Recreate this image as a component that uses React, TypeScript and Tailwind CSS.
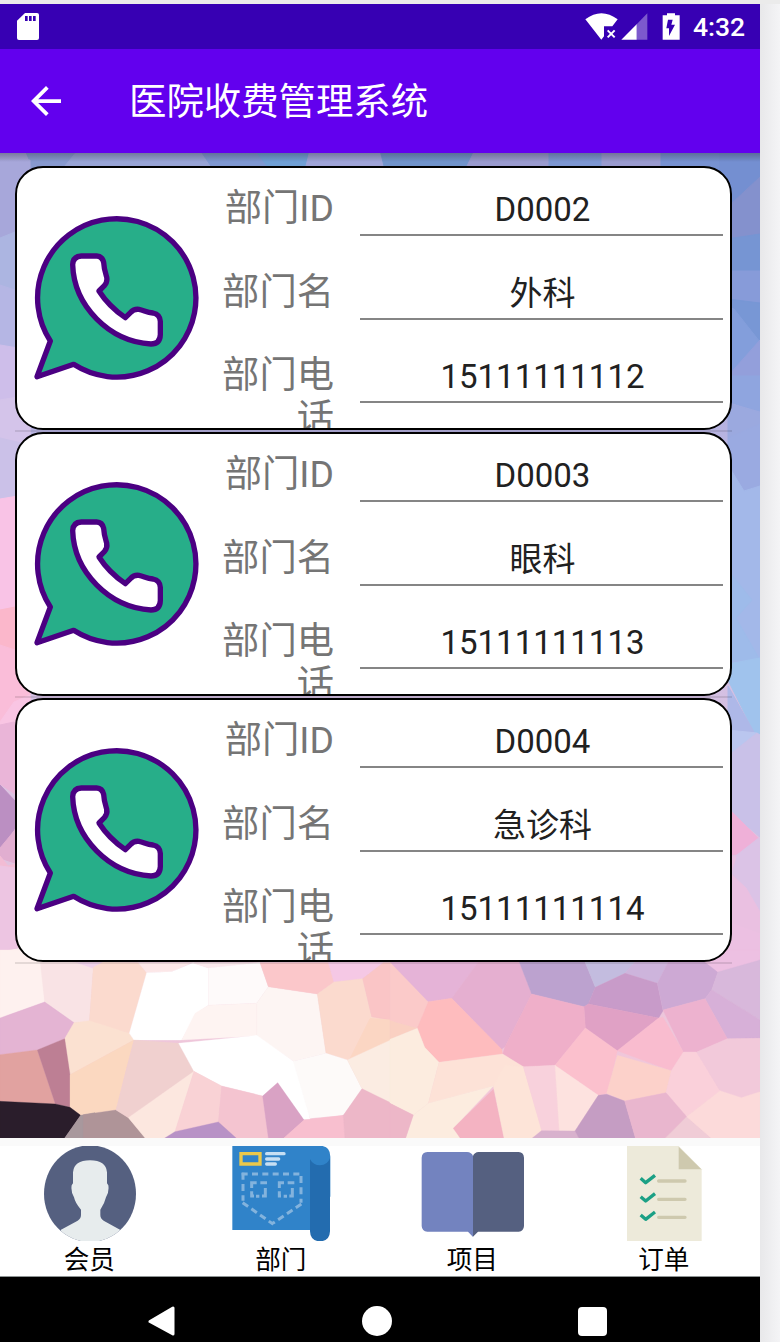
import type { ReactNode } from "react";

type Department = { id: string; name: string; phone: string };
type Shape = [fill: string, points: string];

const departments: Department[] = [
  { id: "D0002", name: "外科", phone: "15111111112" },
  { id: "D0003", name: "眼科", phone: "15111111113" },
  { id: "D0004", name: "急诊科", phone: "15111111114" },
];

const topShapes: Shape[] = [
  ["#a7a5d8", "0,150 30,150 24,230 0,240"],
  ["#8799cf", "25,150 78,150 60,175 36,175"],
  ["#98a4d6", "78,150 205,150 215,172 60,172"],
  ["#7f98d2", "200,150 310,150 300,172 215,172"],
  ["#70a0d6", "255,150 312,150 305,170 270,170"],
  ["#9fa4d8", "310,150 380,150 385,170 305,170"],
  ["#7194cc", "380,150 480,150 465,170 385,170"],
  ["#9a9bcf", "475,150 549,150 549,170 465,170"],
  ["#7d97d3", "549,150 602,150 602,170 549,170"],
  ["#9a9bcf", "602,150 661,150 661,170 602,170"],
  ["#7792d2", "661,150 770,150 770,220 661,170"],
];

const leftShapes: Shape[] = [
  ["#a7a7da", "0,160 30,160 30,226 0,240"],
  ["#acb5e1", "0,238 30,226 30,300 0,285"],
  ["#b5b6e4", "0,285 30,295 30,350 0,345"],
  ["#cebeea", "0,345 30,350 30,440 0,418"],
  ["#d4c4ea", "0,400 30,395 30,500 0,500"],
  ["#cbc1e8", "0,438 30,445 30,498 0,499"],
  ["#f9c3e6", "0,499 30,494 30,610 0,612"],
  ["#fbb7cb", "0,610 30,604 30,665 0,660"],
  ["#fabdd9", "0,645 30,655 30,700 0,740"],
  ["#f9c5e3", "0,722 14,702 30,695 30,760 0,740"],
  ["#eab5d8", "0,725 14,722 30,735 30,804 0,784"],
  ["#bb8fc2", "0,785 16,802 26,812 0,850"],
  ["#e1aed0", "0,848 20,824 30,840 30,868 0,858"],
  ["#f2bcd4", "0,856 8,866 30,860 30,880 0,868"],
  ["#edc5e2", "0,866 30,870 30,944 0,952"],
  ["#fdf0f0", "0,952 48,944 48,985 0,1020"],
];

const rightShapes: Shape[] = [
  ["#748fd1", "720,150 760,150 760,220 720,240"],
  ["#8491cd", "730,205 760,177 760,234 730,242"],
  ["#7695d3", "720,240 760,234 760,272 720,274"],
  ["#879bd9", "720,271 760,271 760,303 720,303"],
  ["#7897d5", "720,298 760,303 760,342 732,307"],
  ["#839edb", "720,306 734,309 760,342 760,376 720,376"],
  ["#939fdb", "728,376 760,340 760,376"],
  ["#8fa5df", "720,376 760,376 760,412 732,403"],
  ["#9ba9df", "728,403 760,412 760,430 728,438"],
  ["#9aaae1", "728,438 760,424 760,488 744,491 728,470"],
  ["#a3b8e9", "728,465 744,491 760,486 760,660 728,664"],
  ["#9ebbea", "728,570 752,600 736,618 760,660 728,660"],
  ["#a0c3ed", "728,664 760,658 760,742 754,732 728,680"],
  ["#aeb8e8", "728,686 754,732 728,731"],
  ["#bac6ef", "728,730 757,733 732,756 728,750"],
  ["#c9c1e8", "728,756 757,733 760,735 760,837 728,810"],
  ["#efb0d8", "730,810 758,838 744,853 730,855"],
  ["#dbc3e6", "728,862 760,837 760,912 730,870"],
  ["#eac0e1", "728,855 736,857 731,874 746,888 760,912 760,934 728,930"],
  ["#ecc0e2", "728,922 760,934 760,960 728,972"],
];

const lowerLeftShapes: Shape[] = [
  ["#fef1ef", "0,0 120,0 135,156 0,204"],
  ["#f9e3e5", "120,30 240,38 280,52 268,215 222,218 134,156"],
  ["#f0d1ea", "230,38 320,38 280,55"],
  ["#fbdace", "280,52 310,36 415,38 440,68 388,250 268,215"],
  ["#e4b4d3", "0,204 134,156 222,218 194,266 112,300 0,314"],
  ["#fbe1d1", "194,266 222,218 268,212 388,250 402,270 210,374"],
  ["#e1a2a0", "0,314 112,300 166,462 0,454"],
  ["#bd7f94", "112,300 194,266 210,374 210,472 166,462"],
  ["#fbd8c0", "210,374 402,270 378,360 348,480 242,496 210,472"],
  ["#2a1d2b", "0,454 166,462 210,472 242,496 190,570 0,570"],
  ["#a8989d", "242,496 285,488 285,570 190,570"],
  ["#af9498", "250,494 348,480 385,503 442,570 250,570"],
  ["#fce7e8", "415,38 575,38 515,65 440,68"],
  ["#ffffff", "440,68 515,65 580,38 625,54 625,166 590,190 545,270 402,270 388,250"],
  ["#fbe9ec", "575,38 780,38 625,54"],
  ["#fefafa", "625,54 780,38 805,110 770,160 625,166"],
  ["#fef4f2", "625,166 770,160 770,258 545,270 585,190"],
  ["#fdf5f3", "805,110 952,132 978,310 880,334 770,258 770,160"],
  ["#fbc7ca", "780,38 985,38 1002,96 952,132 805,110"],
  ["#f5c8e5", "985,38 1150,38 1088,86 1002,96"],
  ["#fbdace", "952,132 1002,96 1088,86 1115,200 1170,210 1170,270 1042,330 978,310"],
  ["#fac5c6", "1088,86 1150,38 1180,38 1180,212 1115,200"],
  ["#fbd6c3", "1110,205 1180,210 1180,268 1050,325"],
  ["#f0d0cf", "402,270 536,280 582,364 385,503 348,480"],
  ["#fce7df", "582,364 525,545 490,570 440,570 385,503"],
  ["#ffffff", "536,280 770,256 880,334 905,350 930,508 910,508 833,398 788,438 665,408 582,364"],
  ["#f9d2d5", "582,364 665,408 655,516 525,545"],
  ["#f4c4d0", "665,408 788,438 806,570 710,570 655,516"],
  ["#d9a2c4", "788,438 833,398 912,510 845,570 806,570"],
  ["#fdfaf9", "880,334 978,310 1042,330 1086,416 1030,496 930,505"],
  ["#fbece2", "1042,330 1180,266 1180,465 1086,416"],
  ["#f8bfcf", "912,510 1030,496 1035,570 845,570"],
  ["#edb7c8", "1030,496 1086,416 1180,462 1180,570 1035,570"],
  ["#b892c6", "525,545 655,516 715,570 485,570"],
];

const lowerRightShapes: Shape[] = [
  ["#fbcac9", "0,30 115,155 82,235 0,212"],
  ["#fad0c2", "0,212 82,235 0,268"],
  ["#e5b3d7", "0,36 265,36 185,145 115,155"],
  ["#e5afd0", "265,36 388,36 425,132 345,290 335,298 185,145"],
  ["#febcbe", "115,155 185,145 335,298 338,312 147,337 104,292 82,235"],
  ["#bca2cf", "388,36 585,36 616,112 595,162 582,170 425,132"],
  ["#c3bcdf", "585,36 735,36 705,70 616,112"],
  ["#cdb4dc", "735,36 835,36 802,100 705,70"],
  ["#c89bc9", "616,112 705,70 802,100 819,182 806,204 595,162"],
  ["#e0a1c5", "582,170 595,162 806,204 682,302 586,234"],
  ["#efafc9", "425,132 582,170 586,234 495,346 400,350 338,312 345,290"],
  ["#cda9d4", "835,36 950,36 984,66 965,120 945,146 819,180 802,100"],
  ["#edc0e2", "945,36 1000,0 1110,0 1110,30 984,66"],
  ["#d8b8db", "984,66 1110,30 1110,210 965,120"],
  ["#d7b0d8", "945,146 965,120 1110,210 1110,265 1012,266"],
  ["#edb2cf", "819,180 945,146 1012,266 920,306 880,306"],
  ["#f9bccf", "806,204 819,202 880,306 844,362 682,302"],
  ["#fbc0cd", "586,234 682,302 652,430 625,436 495,346"],
  ["#fcd1ca", "682,316 844,362 828,428 704,453 650,430"],
  ["#fad0da", "880,306 920,306 990,422 890,500 828,428 844,362"],
  ["#f2c9da", "920,306 1012,266 1110,265 1110,430 1054,443 990,422"],
  ["#fcecdf", "0,268 82,235 104,292 147,337 115,460 70,495 0,460"],
  ["#fde2d7", "147,337 338,312 400,350 345,390 310,408 115,460"],
  ["#fcecdf", "115,460 310,408 190,535 215,570 45,570 70,495"],
  ["#fde4d8", "310,408 345,345 400,350 455,540 420,570 342,570"],
  ["#edb7c8", "0,460 70,495 45,570 0,570"],
  ["#f4b3c2", "310,418 342,570 215,570 190,535"],
  ["#f8d1dc", "400,350 495,346 508,543 455,542"],
  ["#fde2df", "495,346 625,436 555,543 508,543"],
  ["#d8b1cd", "455,542 555,543 570,570 420,570"],
  ["#c59dc3", "625,436 650,433 704,453 738,570 570,570 555,543"],
  ["#e9b6ce", "704,453 828,428 890,500 828,570 738,570"],
  ["#f0ccd6", "890,500 970,570 820,570"],
  ["#fcdada", "990,422 1054,443 1110,425 1110,570 970,570 890,500"],
];

function Shapes({ shapes, transform }: { shapes: Shape[]; transform?: string }) {
  return (
    <g transform={transform}>
      {shapes.map(([fill, points], i) => (
        <polygon key={i} fill={fill} stroke={fill} strokeWidth="1" points={points} />
      ))}
    </g>
  );
}

function Mosaic() {
  return (
    <svg className="absolute inset-0 h-full w-full" viewBox="0 153 760 985" preserveAspectRatio="none">
      <defs>
        <linearGradient id="sky" x1="0" y1="0" x2="0" y2="1">
          <stop offset="0" stopColor="#8c9bd2" />
          <stop offset="0.4" stopColor="#c9bde6" />
          <stop offset="1" stopColor="#f6c8d8" />
        </linearGradient>
        <linearGradient id="barShadow" x1="0" y1="0" x2="0" y2="1">
          <stop offset="0" stopColor="#303040" stopOpacity="0.38" />
          <stop offset="1" stopColor="#303040" stopOpacity="0" />
        </linearGradient>
      </defs>
      <rect x="0" y="153" width="760" height="985" fill="url(#sky)" />
      <Shapes shapes={topShapes} />
      <Shapes shapes={leftShapes} />
      <Shapes shapes={rightShapes} />
      <Shapes shapes={lowerLeftShapes} transform="translate(0 950) scale(0.33333)" />
      <Shapes shapes={lowerRightShapes} transform="translate(390 950) scale(0.33333)" />
      <rect x="0" y="153" width="760" height="9" fill="url(#barShadow)" />
    </svg>
  );
}

function PhoneBubble() {
  return (
    <svg className="h-[168px] w-[168px]" viewBox="96 176 504 504" fill="none" stroke="#4b0082" strokeWidth="16" strokeLinejoin="round">
      <path fill="#27ae89" d="M151 560A237.500 237.500 0 1 1 221 630L111 667Z" />
      <path
        fill="#fff"
        d="M244 305H290Q307 306 311 324C312 344 315 352 320 368Q323 383 313 394L297 410C316 440 344 468 376 490L392 474Q402 463 417 465C432 468 440 474 459 476Q480 480 481 501V541Q480 569 453 569C327 561 222 455 218 331Q219 306 244 305Z"
      />
    </svg>
  );
}

function Field({ label, value }: { label: string; value: string }) {
  return (
    <div className="flex h-[83.600px]">
      <div className="mr-[26px] w-[122px] pt-1 text-right text-[37.300px] leading-[43px] text-[#757575]">
        {label}
      </div>
      <div className="flex h-[53px] w-[363px] items-center justify-center border-b-2 border-[#858585] pt-[2px] pl-[2px] text-[33px] leading-none text-[#212121]">
        {value}
      </div>
    </div>
  );
}

function DepartmentCard({ department }: { department: Department }) {
  return (
    <li className="border-b-2 border-black/10">
      <article className="flex h-[264px] overflow-hidden rounded-[28px] border-2 border-black bg-white">
        <div className="w-[195px] shrink-0 pt-[45px] pl-[15px]">
          <PhoneBubble />
        </div>
        <div className="pt-[15px]">
          <Field label="部门ID" value={department.id} />
          <Field label="部门名" value={department.name} />
          <Field label="部门电话" value={department.phone} />
        </div>
      </article>
    </li>
  );
}

function StatusBar() {
  return (
    <div className="flex h-[45px] items-center bg-[#3700b3] text-white">
      <svg className="ml-[17px] h-[27px] w-[22px]" viewBox="0 0 66 81">
        <path fill="currentColor" d="M24 0H60Q66 0 66 6V75Q66 81 60 81H6Q0 81 0 75V23Z" />
        <path fill="#3700b3" d="M24 9h8v15h-8zM36 9h8v15h-8zM48 9h8v15h-8z" />
      </svg>
      <svg className="ml-auto h-[27px] w-[96px]" viewBox="76 38 288 81">
        <path fill="#fff" d="M77 57Q125 20 174 57L158 78H133V108L125 118Z" />
        <path stroke="#fff" strokeWidth="6" d="M144 90L165 111M165 90L144 111" />
        <path fill="#fff" fillOpacity="0.35" d="M231 72L263 39V118H231Z" />
        <path fill="#fff" d="M185 118L231 72V118Z" />
        <path fill="#fff" d="M309 45H322V39H346V45H360V118H309Z" />
        <path fill="#3700b3" d="M325 58H339L335 73H346L328 107V84H320Z" />
      </svg>
      <span className="mr-[15px] ml-[12px] w-[52px] pt-[2px] text-right text-[26.500px] leading-none font-medium">4:32</span>
    </div>
  );
}

function AppBar() {
  return (
    <header className="flex h-[104px] items-center bg-[#6200ee] text-white">
      <svg className="ml-[31px] h-[30px] w-[30px]" viewBox="4 4 16 16">
        <path fill="currentColor" d="M20 11H7.830l5.590-5.590L12 4l-8 8 8 8 1.410-1.410L7.830 13H20v-2z" />
      </svg>
      <h1 className="ml-[68px] pt-1 text-[37.400px] leading-none font-normal">医院收费管理系统</h1>
    </header>
  );
}

function MemberIcon() {
  return (
    <svg className="h-[95px] w-full" viewBox="0 48 538.500 285">
      <defs>
        <clipPath id="memberDisc">
          <ellipse cx="270" cy="191" rx="138" ry="145" />
        </clipPath>
      </defs>
      <g clipPath="url(#memberDisc)">
        <path fill="#556080" d="M130 46H410V335H130Z" />
        <path
          fill="#e7eced"
          d="M183 299L233 272Q243 266 243 255V239Q226 220 222 202Q212 185 215 166L219 160V127Q222 91 270 91Q318 91 321 127V160L325 166Q328 185 318 202Q314 220 301 239V255Q301 266 311 272L360 299V340H183Z"
        />
      </g>
    </svg>
  );
}

function DepartmentIcon() {
  return (
    <svg className="h-[95px] w-full" viewBox="576 48 538.500 285" fill="none">
      <path fill="#3083c9" d="M697 48H968Q991 52 991 80V200H930V300H697Z" />
      <path fill="#236caf" d="M930 88Q940 106 960 106Q983 105 990 84V304Q989 333 960 334Q931 333 930 304Z" />
      <path stroke="#ebc84a" strokeWidth="10" d="M723 71H780V102H723Z" />
      <path stroke="#c6dff3" strokeWidth="10" strokeLinecap="round" d="M800 71H852M800 87H836M800 102H826" />
      <g stroke="#83b3dd" strokeWidth="9">
        <path strokeDasharray="18 13" d="M725 132H904" />
        <path strokeDasharray="21 13" d="M729 128V212M903 138V218" />
        <path strokeDasharray="20 12" d="M728 218L820 283M904 222L818 280" />
        <path d="M755 174V158H770M781 158H801M796 174V198H786M755 184V198H762M768 199H778M838 174V158H852M863 158H883M877 174V198H868M838 184V198H843M851 199H861" />
      </g>
    </svg>
  );
}

function ProjectIcon() {
  return (
    <svg className="h-[95px] w-full" viewBox="-21 48 538.500 285">
      <path fill="#7383bf" d="M112 66H231Q245 67 249 78V321L234 305H112Q96 304 95 288V83Q96 67 112 66Z" />
      <path fill="#556080" d="M266 66H386Q401 67 402 83V288Q401 304 386 305H264L249 320V78Q253 67 266 66Z" />
    </svg>
  );
}

function OrderIcon() {
  return (
    <svg className="h-[95px] w-full" viewBox="555 48 538.500 285" fill="none">
      <path fill="#edeada" d="M711 48H866L935 118V333H711Z" />
      <path fill="#cec9ae" d="M866 50L934 118H866Z" />
      <path stroke="#cec9ae" strokeWidth="10" strokeLinecap="round" d="M806 153H885M806 208H885M806 262H885" />
      <path stroke="#1ba085" strokeWidth="10" strokeLinejoin="round" d="M752 145L767 158L795 136M752 200L767 213L795 191M752 255L767 268L795 246" />
    </svg>
  );
}

function Tab({ icon, label }: { icon: ReactNode; label: string }) {
  return (
    <button className="flex flex-col items-center text-black">
      {icon}
      <span className="mt-[6px] -ml-px text-[25.600px] leading-[27px]">{label}</span>
    </button>
  );
}

export default function App() {
  return (
    <div className="flex h-[1342px] w-[780px] flex-col overflow-hidden bg-[#ebebeb] pt-1 font-[Roboto,'Noto_Sans_CJK_SC',sans-serif]">
      <div className="flex min-h-0 flex-1">
        <div className="flex w-[760px] flex-col bg-[#fafafa]">
          <StatusBar />
          <AppBar />
          <main className="relative h-[985px]">
            <Mosaic />
            <ul className="relative pt-[13px] pr-[28px] pl-[15px]">
              {departments.map((department) => (
                <DepartmentCard key={department.id} department={department} />
              ))}
            </ul>
          </main>
          <nav className="mt-2 grid h-[131px] grid-cols-4 gap-x-3 border-b border-[#8e9494] bg-white pr-[6px]">
            <Tab icon={<MemberIcon />} label="会员" />
            <Tab icon={<DepartmentIcon />} label="部门" />
            <Tab icon={<ProjectIcon />} label="项目" />
            <Tab icon={<OrderIcon />} label="订单" />
          </nav>
          <footer className="flex h-[65px] bg-black pt-[29px] pl-[148px]">
            <svg className="h-[31px] w-[27px]" viewBox="0 0 27 31">
              <path fill="#fff" stroke="#fff" strokeWidth="3" strokeLinejoin="round" d="M25 2V28L2 15.500Z" />
            </svg>
            <div className="ml-[187px] size-[30px] rounded-full bg-white" />
            <div className="mt-px ml-[186px] size-[29px] rounded-sm bg-white" />
          </footer>
        </div>
        <div className="w-5 bg-linear-to-r from-[#e8e8ea] to-[#f4f4f6]" />
      </div>
    </div>
  );
}
